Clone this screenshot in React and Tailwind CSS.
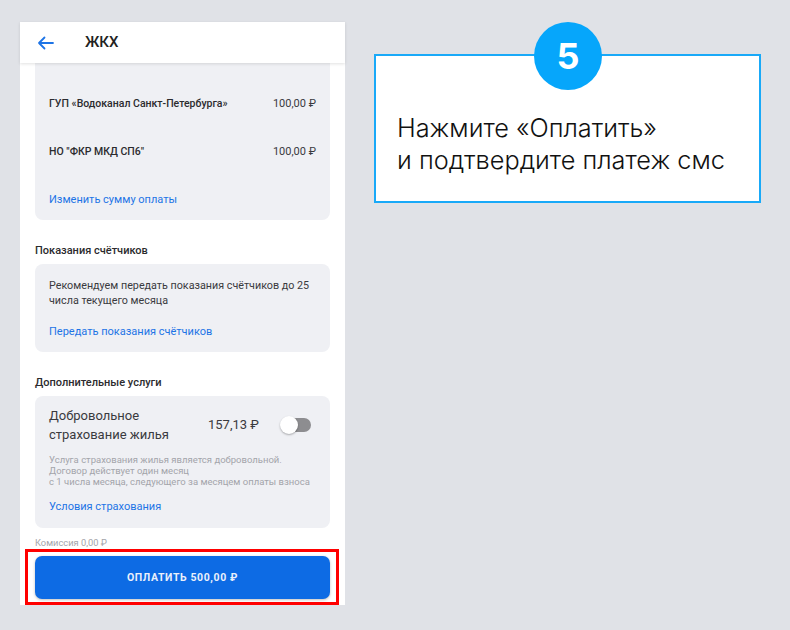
import React from 'react';

const Row = ({ name, sum }) => (
    <div className="h-[48px] flex items-center justify-between text-[10.5px] font-medium text-[#2b2b2e]">
        <span>{name}</span>
        <span className="text-[11px] font-normal text-[#3a3a3e]">{sum}</span>
    </div>
);

const Label = ({ children }) => (
    <div className="mt-[23px] h-[16px] flex items-center text-[11px] font-medium text-[#2b2b2e]">{children}</div>
);

const Link = ({ children, className = '' }) => (
    <div className={`h-[16px] flex items-center text-[11px] text-[#1d74e6] ${className}`}>{children}</div>
);

const PhoneScreen = () => (
    <div className="w-[325px] bg-white flex flex-col" style={{ fontFamily: 'Roboto, sans-serif' }}>
        <div className="relative z-10 h-[41px] flex items-center shadow-[0_1px_3px_rgba(0,0,0,0.12)] bg-white">
            <svg className="ml-[17px]" width="17" height="14" viewBox="0 0 17 14" fill="none">
                <path d="M16 7H2M7.5 1.5L2 7l5.5 5.5" stroke="#1d74e6" strokeWidth="1.8" strokeLinecap="round" strokeLinejoin="round" />
            </svg>
            <span className="ml-[31px] text-[15px] font-medium text-[#222]">ЖКХ</span>
        </div>

        <div className="px-[15px]">
            <div className="bg-[#eff0f4] rounded-b-[8px] px-[14px] pt-[17px] pb-[12px]">
                <Row name="ГУП «Водоканал Санкт-Петербурга»" sum="100,00 ₽" />
                <Row name={'НО "ФКР МКД СП6"'} sum="100,00 ₽" />
                <Link className="mt-[16px]">Изменить сумму оплаты</Link>
            </div>

            <Label>Показания счётчиков</Label>
            <div className="mt-[5px] bg-[#eff0f4] rounded-[8px] px-[14px] pt-[14px] pb-[12px]">
                <p className="text-[10.75px] leading-[15px] text-[#3a3a3e]">
                    Рекомендуем передать показания счётчиков до 25<br />числа текущего месяца
                </p>
                <Link className="mt-[16px]">Передать показания счётчиков</Link>
            </div>

            <Label>Дополнительные услуги</Label>
            <div className="mt-[5px] bg-[#eff0f4] rounded-[8px] px-[14px] pt-[10px] pb-[13px]">
                <div className="flex items-center">
                    <div className="text-[13px] leading-[19px] text-[#3a3a3e] w-[159px]">
                        Добровольное<br />страхование жилья
                    </div>
                    <div className="text-[13px] text-[#3a3a3e]">157,13 ₽</div>
                    <div className="relative ml-[21px] w-[31px] h-[18px] flex items-center">
                        <div className="absolute left-[3px] right-0 h-[14px] rounded-full bg-[#8d8d90]" />
                        <div className="absolute left-0 w-[18px] h-[18px] rounded-full bg-white shadow-[0_1px_2px_rgba(0,0,0,0.3)]" />
                    </div>
                </div>
                <p className="mt-[10px] text-[9.5px] leading-[11px] text-[#a3a4aa]">
                    Услуга страхования жилья является добровольной.<br />
                    Договор действует один месяц<br />
                    с 1 числа месяца, следующего за месяцем оплаты взноса
                </p>
                <Link className="mt-[12px]">Условия страхования</Link>
            </div>

            <div className="mt-[9px] h-[12px] flex items-center text-[9.3px] text-[#a3a4aa]">Комиссия 0,00 ₽</div>
        </div>

        <div className="ml-[5px] mr-[6px] border-[3px] border-[#ff0000] pl-[7px] pr-[6px] pt-[4px] pb-[3px]">
            <button className="w-full h-[43px] rounded-[7px] bg-[#0d6be4] shadow-[0_1px_3px_rgba(0,0,0,0.25)] text-[10.5px] font-bold tracking-[0.6px] text-[#eaf0fb]">
                ОПЛАТИТЬ 500,00 ₽
            </button>
        </div>
    </div>
);

const StepCard = () => (
    <div className="relative mt-[32px] ml-[29px] w-[387px] h-[149px] bg-white border-2 border-[#19a9f8] pl-[21px] pt-[56px]">
        <div className="absolute left-[158px] top-[-34px] w-[68px] h-[68px] rounded-full bg-[#06a6fb] flex items-center justify-center">
            <span className="text-white text-[36px] font-bold leading-none" style={{ fontFamily: 'Inter, sans-serif' }}>5</span>
        </div>
        <p className="text-[25.3px] leading-[32px] font-light text-[#111]" style={{ fontFamily: 'Inter, sans-serif' }}>
            Нажмите «Оплатить»<br />и подтвердите платеж смс
        </p>
    </div>
);

export default function App() {
    return (
        <div className="w-[790px] h-[630px] bg-[#e0e2e7] overflow-hidden flex items-start pl-[20px] pt-[22px]">
            <PhoneScreen />
            <StepCard />
        </div>
    );
}
